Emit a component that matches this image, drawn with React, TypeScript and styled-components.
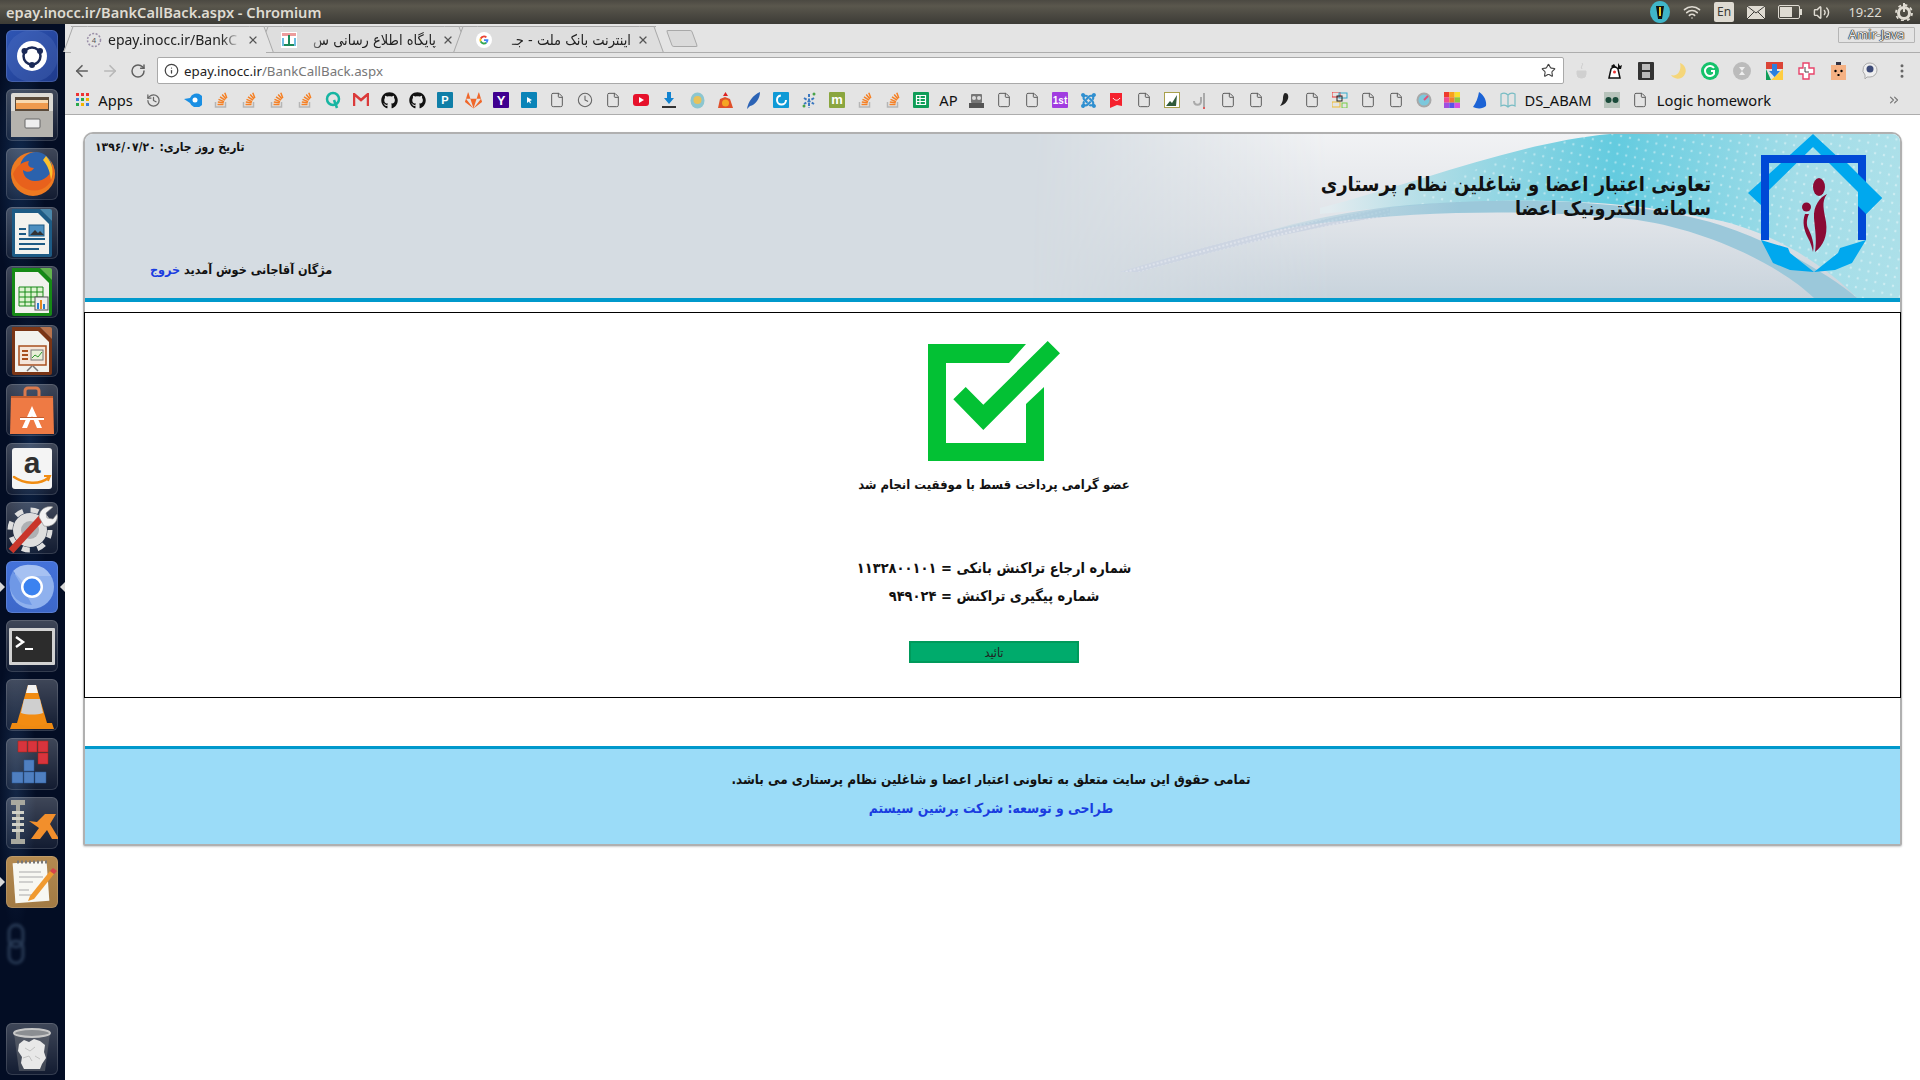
import { ReactNode } from 'react';
import styled, { createGlobalStyle } from 'styled-components';
import { ArrowLeft, ArrowRight, ChevronsRight, Clock, EllipsisVertical, File, History, Info, RotateCw, Star, Volume2, Wifi, X } from 'lucide-react';
import { FaGithub, FaGitlab, FaJoomla } from 'react-icons/fa';

const FARSI = `"DejaVu Sans Condensed", "DejaVu Sans", sans-serif`;
const UI = `"Noto Sans", "Open Sans", sans-serif`;

const GlobalStyle = createGlobalStyle`
  html, body {
    margin: 0;
    padding: 0;
    background: #fff;
  }
`;

const Screen = styled.div`
  width: 1920px;
  height: 1080px;
  display: flex;
  flex-direction: column;
  overflow: hidden;
  font-family: ${UI};
`;

/* ---------- unity panel ---------- */

const TopBar = styled.div`
  height: 24px;
  flex: none;
  display: flex;
  align-items: center;
  padding-left: 6px;
  background: linear-gradient(#4b4942, #5a574d 25%, #3c3b36);
  color: #dfdbd2;
  font-size: 14.6px;
  font-weight: 600;
`;

const Indicators = styled.div`
  margin-left: auto;
  padding-right: 4px;
  display: flex;
  align-items: center;
  height: 24px;
  color: #dfdbd2;
`;

const Indicator = styled.div<{ $w: number }>`
  width: ${(p) => p.$w}px;
  display: flex;
  justify-content: center;
  align-items: center;
`;

const LangBadge = styled.div`
  width: 20px;
  height: 20px;
  border-radius: 2px;
  background: #dfdbd2;
  color: #3c3b36;
  font-size: 12px;
  font-weight: 400;
  line-height: 20px;
  text-align: center;
`;

const ClockText = styled.div`
  font-size: 13px;
  font-weight: 400;
  color: #dfdbd2;
`;

const Desktop = styled.div`
  flex: 1;
  display: flex;
  min-height: 0;
`;

/* ---------- launcher ---------- */

const Launcher = styled.div`
  position: relative;
  width: 65px;
  flex: none;
  box-sizing: border-box;
  padding: 6px 0 5px 6px;
  display: flex;
  flex-direction: column;
  gap: 7px;
  background:
    radial-gradient(ellipse 26px 130px at 20px 140px, rgba(40, 90, 150, 0.35), transparent),
    radial-gradient(ellipse 22px 160px at 30px 420px, rgba(40, 90, 150, 0.3), transparent),
    radial-gradient(ellipse 20px 150px at 16px 760px, rgba(60, 100, 150, 0.3), transparent),
    #030d24;
`;

const Tile = styled.div<{ $bg?: string; $bottom?: boolean }>`
  position: relative;
  width: 52px;
  height: 52px;
  flex: none;
  border-radius: 6px;
  background: ${(p) => p.$bg ?? 'linear-gradient(rgba(255,255,255,0.24), rgba(255,255,255,0.06))'};
  box-shadow: inset 0 0 0 1px rgba(255, 255, 255, 0.14);
  margin-top: ${(p) => (p.$bottom ? 'auto' : '0')};
  svg {
    display: block;
  }
`;

const Pip = styled.i<{ $side: 'left' | 'right' }>`
  position: absolute;
  top: 21px;
  ${(p) => (p.$side === 'left' ? 'left: -6px;' : 'right: -7px;')}
  width: 0;
  height: 0;
  border-top: 5px solid transparent;
  border-bottom: 5px solid transparent;
  ${(p) => (p.$side === 'left' ? 'border-left: 5px solid #d8d8d8;' : 'border-right: 5px solid #d8d8d8;')}
`;

const GhostLink = styled.svg`
  position: absolute;
  left: 5px;
  top: 898px;
  opacity: 0.3;
  filter: blur(1.5px);
`;

const Art = ({ children }: { children: ReactNode }) => (
  <svg width="52" height="52" viewBox="0 0 52 52">
    {children}
  </svg>
);

const LibreDoc = ({ edge, corner, children }: { edge: string; corner: string; children: ReactNode }) => (
  <Art>
    <path d="M6 2h28l12 12v34a2 2 0 0 1-2 2H8a2 2 0 0 1-2-2z" fill={edge} />
    <path d="M34 2h10a2 2 0 0 1 2 2v10z" fill={corner} />
    <path d="M9 6h23l11 11v30H9z" fill="#f2f2ee" />
    {children}
  </Art>
);

const launcherIcons: { key: string; bg?: string; pips?: ('left' | 'right')[]; bottom?: boolean; art: ReactNode }[] = [
  {
    key: 'dash',
    bg: 'linear-gradient(135deg, #2f56b5, #1e3a8c)',
    art: (
      <Art>
        <circle cx="26" cy="26" r="26" fill="#5f7fcb" fillOpacity="0.25" />
        <circle cx="26" cy="26" r="15" fill="#fff" />
        <circle cx="26" cy="26" r="8.500" fill="none" stroke="#1b2a57" strokeWidth="2.500" />
        <circle cx="34" cy="21" r="3" fill="#1b2a57" />
        <circle cx="18.500" cy="21" r="3" fill="#1b2a57" />
        <circle cx="26" cy="35" r="3" fill="#1b2a57" />
      </Art>
    ),
  },
  {
    key: 'files',
    art: (
      <Art>
        <rect x="5" y="4" width="42" height="44" rx="2" fill="#dcdad5" />
        <rect x="9" y="8" width="34" height="14" fill="#5a4a3a" />
        <rect x="10" y="11" width="32" height="3" fill="#f7d9b0" />
        <rect x="10" y="14" width="32" height="6" fill="#ee9a4d" />
        <rect x="5" y="22" width="42" height="26" fill="#b5b3ae" />
        <rect x="19" y="30" width="15" height="9" rx="1" fill="#eee" stroke="#666" />
      </Art>
    ),
  },
  {
    key: 'firefox',
    art: (
      <Art>
        <circle cx="27" cy="26" r="22" fill="#ee7a21" />
        <circle cx="30" cy="20" r="16" fill="#2b62ad" />
        <path d="M7 26c4 16 24 22 35 11 6-6 7-14 5-20-2 10-8 16-18 16-8 0-12-6-12-11 4 3 9 2 11-2-5 0-7-3-5-7-8 1-13 6-16 13z" fill="#e8611c" />
        <path d="M40 8c7 8 8 16 5 24-1-8-3-14-8-20z" fill="#fbc02d" />
      </Art>
    ),
  },
  {
    key: 'writer',
    art: (
      <LibreDoc edge="#1d5b85" corner="#4a87ab">
        <path d="M13 21h7v2h-7zM13 26h7v2h-7zM13 31h26v2H13zM13 36h26v2H13zM13 41h20v2H13z" fill="#1d5b85" />
        <rect x="23" y="18" width="15" height="11" fill="#4c8fc0" stroke="#1d5b85" />
        <path d="M24 28l5-5 3 3 2-2 4 4z" fill="#333" />
      </LibreDoc>
    ),
  },
  {
    key: 'calc',
    art: (
      <LibreDoc edge="#168a16" corner="#62b44e">
        <path d="M13 21h24v19H13zM13 26h24M13 31h24M13 36h24M19 21v19M25 21v19M31 21v19" fill="#dff3d2" stroke="#168a16" />
        <rect x="29" y="31" width="13" height="13" fill="#eee" stroke="#555" />
        <rect x="31" y="37" width="2" height="6" fill="#2a7fd0" />
        <rect x="34" y="34" width="2" height="9" fill="#e8861d" />
        <rect x="37" y="38" width="2" height="5" fill="#2a7fd0" />
      </LibreDoc>
    ),
  },
  {
    key: 'impress',
    art: (
      <LibreDoc edge="#7a3516" corner="#b8734d">
        <rect x="13" y="21" width="27" height="19" fill="#f5e6da" stroke="#a84f1f" strokeWidth="1.5" />
        <path d="M16 25h6v2h-6zM16 29h6v2h-6zM16 33h6v2h-6z" fill="#a84f1f" />
        <rect x="25" y="25" width="12" height="10" fill="#e8f0d8" stroke="#777" />
        <path d="M26 33l3-3 3 2 4-5" stroke="#2f9a2f" fill="none" />
        <path d="M26 41l-5 5M27 41l5 5" stroke="#777" strokeWidth="1.5" />
      </LibreDoc>
    ),
  },
  {
    key: 'software',
    art: (
      <Art>
        <path d="M19 13V7a3 3 0 0 1 3-3h8a3 3 0 0 1 3 3v6" fill="none" stroke="#d97a4e" strokeWidth="3" />
        <path d="M5 12h42l1 38H4z" fill="#ee7a44" />
        <path d="M5 12h42v2H5z" fill="#c25c2e" />
        <path d="M26 22l10 22h-5l-5-12-5 12h-5z" fill="#fff" />
        <rect x="14" y="33" width="24" height="3" fill="#fff" />
        <rect x="14" y="33" width="24" height="1" fill="#c25c2e" />
      </Art>
    ),
  },
  {
    key: 'amazon',
    art: (
      <Art>
        <rect x="6" y="5" width="40" height="41" rx="3" fill="#f4f4f4" />
        <text x="26" y="30" fontFamily="Liberation Sans, sans-serif" fontWeight="700" fontSize="30" textAnchor="middle" fill="#2f2f2f">a</text>
        <path d="M8 34c10 7 26 8 34 1" fill="none" stroke="#f08c12" strokeWidth="2.5" strokeLinecap="round" />
        <path d="M38 33l6 0-2 5" fill="none" stroke="#f08c12" strokeWidth="2" />
      </Art>
    ),
  },
  {
    key: 'settings',
    art: (
      <Art>
        <circle cx="24" cy="28" r="17" fill="#dedede" />
        <circle cx="24" cy="28" r="20" fill="none" stroke="#dedede" strokeWidth="5" strokeDasharray="8 7.700" />
        <circle cx="24" cy="28" r="9" fill="#aeb0b3" />
        <path d="M5 49L37 14" stroke="#c9362b" strokeWidth="6.500" />
        <path d="M33 15c0-7 7-12 14-10l-7 6 1 5 6 1 4-5c2 7-5 14-13 12z" fill="#f2f2f2" stroke="#888" strokeWidth="0.6" />
      </Art>
    ),
  },
  {
    key: 'chromium',
    bg: 'linear-gradient(#4472da, #3c67c9)',
    pips: ['left', 'right'],
    art: (
      <Art>
        <circle cx="26" cy="26" r="22" fill="#8fb1ee" />
        <path d="M26 4a22 22 0 0 1 19 11H26a11 11 0 0 0-9.5 5.5L7 10A22 22 0 0 1 26 4z" fill="#a6c1f2" />
        <path d="M7 10l10 17 9 17a22 22 0 0 1-19-34z" fill="#6f98e6" />
        <circle cx="26" cy="26" r="11" fill="#fff" />
        <circle cx="26" cy="26" r="8.5" fill="#3b82f0" />
      </Art>
    ),
  },
  {
    key: 'terminal',
    art: (
      <Art>
        <rect x="3" y="8" width="46" height="37" rx="1" fill="#d2d2d2" />
        <rect x="6" y="11" width="40" height="31" fill="#2c2c2c" />
        <path d="M10 17l7 5-7 5" fill="none" stroke="#fff" strokeWidth="2.5" />
        <rect x="19" y="28" width="8" height="2" fill="#fff" />
      </Art>
    ),
  },
  {
    key: 'vlc',
    art: (
      <Art>
        <path d="M6 44h40l2 6H4z" fill="#ee8a12" />
        <path d="M22 6h8l11 38c-6 4-24 4-30 0z" fill="#f28c12" />
        <path d="M22 6h8l2 8H20z" fill="#f3f3f3" />
        <path d="M18 20h16l3 14c-6 2-16 2-22 0z" fill="#cfcfcf" />
      </Art>
    ),
  },
  {
    key: 'blocks',
    art: (
      <Art>
        <path d="M12 3h9v11h-9zM22 3h9v11h-9zM32 3h10v11H32zM32 15h10v11H32z" fill="#d8343d" stroke="#a21" strokeWidth="0.5" />
        <path d="M18 22h10v11H18zM6 34h11v11H6zM18 34h10v11H18zM29 34h11v11H29z" fill="#4f7fc0" stroke="#2b5a9a" strokeWidth="0.5" />
      </Art>
    ),
  },
  {
    key: 'xarchiver',
    art: (
      <Art>
        <path d="M5 3h14v5h-5v34h5v5H5v-5h5V8H5z" fill="#a9a99f" />
        <path d="M6 14h12v3H6zM6 20h12v3H6zM6 26h12v3H6zM6 32h12v3H6z" fill="#d2d2c8" />
        <path d="M50 17H39l-8 8-8-1 10 7-8 11h9l7-9 5 9h7l-9-15z" fill="#f28f2c" />
      </Art>
    ),
  },
  {
    key: 'notes',
    bg: 'linear-gradient(#b48a50, #a27a44)',
    pips: ['left'],
    art: (
      <Art>
        <rect x="8" y="6" width="34" height="40" fill="#f7f7f2" transform="rotate(-4 26 26)" />
        <path d="M11 6h30" stroke="#777" strokeWidth="3" strokeDasharray="2 2" />
        <path d="M13 16h22M13 21h24M13 26h14M13 34h10M13 39h16" stroke="#aaa" strokeWidth="1.2" />
        <path d="M24 40l20-25 4 3-20 25-6 2z" fill="#f09a30" />
        <path d="M44 15l3-3 4 3-3 3z" fill="#d8434b" />
      </Art>
    ),
  },
  {
    key: 'trash',
    bottom: true,
    art: (
      <Art>
        <path d="M8 10l5 38h26l5-38z" fill="#70747a" fillOpacity="0.5" />
        <path d="M13 21l5-4 5 2 5-3 6 2 5 4-1 7 2 6-4 6-2 5H18l-3-6 1-6-4-6z" fill="#e8e8e8" />
        <path d="M19 25l5 3 5-4M17 35l6-2 3 5M29 33l5 3" fill="none" stroke="#c2c2c2" />
        <ellipse cx="26" cy="10" rx="18" ry="4" fill="#8b8e92" stroke="#c8c8c8" strokeWidth="2" />
      </Art>
    ),
  },
];

/* ---------- browser chrome ---------- */

const Browser = styled.div`
  flex: 1;
  min-width: 0;
  display: flex;
  flex-direction: column;
`;

const TabStrip = styled.div`
  position: relative;
  height: 28px;
  flex: none;
  display: flex;
  align-items: flex-end;
  padding-left: 6px;
  background: #e4e4e4;
  border-bottom: 1px solid #adadad;
`;

const Tab = styled.div<{ $active?: boolean }>`
  position: relative;
  width: 195px;
  height: 27px;
  box-sizing: border-box;
  margin-bottom: -1px;
  padding: 0 7px 0 15px;
  display: flex;
  align-items: center;
  gap: 6px;
  background: ${(p) => (p.$active ? '#e4e4e4' : '#dedede')};
  border-top: 1px solid #a8a8a8;
  border-bottom: 1px solid ${(p) => (p.$active ? '#e4e4e4' : '#adadad')};
  z-index: ${(p) => (p.$active ? 2 : 1)};
  &::before,
  &::after {
    content: '';
    position: absolute;
    top: -1px;
    bottom: 0;
    width: 14px;
    background: inherit;
    border-top: 1px solid #a8a8a8;
  }
  &::before {
    left: -3px;
    transform: skewX(-20deg);
    border-left: 1px solid #a8a8a8;
  }
  &::after {
    right: -3px;
    transform: skewX(20deg);
    border-right: 1px solid #a8a8a8;
  }
  & > * {
    position: relative;
    z-index: 1;
  }
`;

const TabIcon = styled.div`
  width: 16px;
  height: 16px;
  flex: none;
  display: flex;
`;

const TabTitle = styled.div<{ $rtl?: boolean }>`
  flex: 1;
  min-width: 0;
  white-space: nowrap;
  font-family: ${(p) => (p.$rtl ? FARSI : UI)};
  font-size: ${(p) => (p.$rtl ? 14.5 : 14)}px;
  color: #222;
  direction: ${(p) => (p.$rtl ? 'rtl' : 'ltr')};
  mask-image: linear-gradient(${(p) => (p.$rtl ? 'to left' : 'to right')}, #000 85%, transparent);
`;

const NewTab = styled.div`
  width: 24px;
  height: 15px;
  margin: 0 0 5px 13px;
  background: #dadada;
  border: 1px solid #a8a8a8;
  border-radius: 2px;
  transform: skewX(20deg);
`;

const UserTag = styled.div`
  position: absolute;
  right: 5px;
  top: 3px;
  width: 77px;
  height: 16px;
  box-sizing: border-box;
  border: 1px solid #b5b5b5;
  border-radius: 1px;
  text-align: center;
  font-size: 12.5px;
  line-height: 14px;
  color: #eaeaea;
  text-shadow: 0 0 1px #222, 0 0 1px #222, 0 0 1px #222, 0 0 1px #222;
`;

const Toolbar = styled.div`
  height: 34px;
  flex: none;
  box-sizing: border-box;
  padding: 4px 2px 3px 3px;
  display: flex;
  background: #e4e4e4;
`;

const NavButton = styled.div<{ $dim?: boolean }>`
  width: 28px;
  display: flex;
  justify-content: center;
  align-items: center;
  color: ${(p) => (p.$dim ? '#b8b8b8' : '#5f5f5f')};
`;

const UrlBox = styled.div`
  flex: 1;
  margin: 0 2px 0 5px;
  box-sizing: border-box;
  background: #fff;
  border: 1px solid #a9a9a9;
  border-radius: 2px;
  display: flex;
  align-items: center;
  padding: 0 7px 0 6px;
  gap: 5px;
  font-size: 13.3px;
  color: #222;
`;

const UrlPath = styled.span`
  color: #777;
`;

const UrlStar = styled.div`
  margin-left: auto;
  display: flex;
  color: #444;
`;

const ExtButton = styled.div`
  width: 32px;
  display: flex;
  justify-content: center;
  align-items: center;
  color: #666;
`;

const BookmarkBar = styled.div`
  height: 28px;
  flex: none;
  box-sizing: border-box;
  padding: 0 0 1px 8px;
  display: flex;
  align-items: center;
  background: #e4e4e4;
  border-bottom: 1px solid #adadad;
  font-size: 14.7px;
  color: #111;
`;

const Slot = styled.div<{ $w?: number; $gap?: number }>`
  width: ${(p) => p.$w ?? 28}px;
  margin-left: ${(p) => p.$gap ?? 0}px;
  flex: none;
  display: flex;
  justify-content: center;
  align-items: center;
  white-space: nowrap;
`;

const Overflow = styled.div`
  margin-left: auto;
  margin-right: 19px;
  display: flex;
  color: #777;
`;

const Doc = () => <File size={16} color="#5d5d5d" strokeWidth={1.5} />;

const StackIcon = () => (
  <svg width="16" height="18" viewBox="0 0 16 18">
    <path d="M2.5 11v5h10v-5" fill="none" stroke="#b5b5b5" strokeWidth="1.5" />
    <path d="M4.5 13.5h6M4.8 11l6 .8M5.5 8.4l5.6 2.2M7 5.8l5 3.4M9.2 3.5l3.8 4.6M11.8 1.8l2 5.2" stroke="#f58025" strokeWidth="1.5" fill="none" />
  </svg>
);

const Box = ({ bg, children }: { bg: string; children: ReactNode }) => (
  <svg width="16" height="16" viewBox="0 0 16 16">
    <rect width="16" height="16" fill={bg} rx="1" />
    {children}
  </svg>
);

const Label = ({ x = 8, y = 12, size = 11, children }: { x?: number; y?: number; size?: number; children: ReactNode }) => (
  <text x={x} y={y} fontFamily="Liberation Sans, sans-serif" fontWeight="700" fontSize={size} textAnchor="middle" fill="#fff">
    {children}
  </text>
);

const bookmarkIcons: ReactNode[] = [
  <svg width="18" height="14" viewBox="0 0 18 14"><path d="M0 6l6-1a7 7 0 1 1 0 5z" fill="#1a8fe3" /><circle cx="11" cy="7" r="2.5" fill="#fff" /></svg>,
  <StackIcon />, <StackIcon />, <StackIcon />, <StackIcon />,
  <svg width="16" height="18" viewBox="0 0 16 18"><circle cx="8" cy="8" r="6" fill="none" stroke="#17b5a2" strokeWidth="2.5" /><path d="M9 9l3 8" stroke="#17b5a2" strokeWidth="2.5" /></svg>,
  <svg width="16" height="14" viewBox="0 0 16 14"><path d="M1 13V1l7 6 7-6v12" fill="none" stroke="#db3a3a" strokeWidth="2.5" /></svg>,
  <FaGithub size={17} color="#111" />,
  <FaGithub size={17} color="#111" />,
  <Box bg="#0f7fa8"><Label>P</Label></Box>,
  <FaGitlab size={17} color="#f0672a" />,
  <Box bg="#400090"><Label size={13} y={13}>Y</Label></Box>,
  <Box bg="#0a84b8"><path d="M6 5l5 3-2 1 1 2-1 .5-1-2-2 1.500z" fill="#fff" /></Box>,
  <Doc />,
  <Clock size={16} color="#666" strokeWidth={1.6} />,
  <Doc />,
  <svg width="16" height="12" viewBox="0 0 16 12"><rect width="16" height="12" rx="3" fill="#e6112b" /><path d="M6 3l5 3-5 3z" fill="#fff" /></svg>,
  <svg width="16" height="17" viewBox="0 0 16 17"><path d="M6 0h4v6h3l-5 6-5-6h3z" fill="#1283d0" /><rect x="1" y="14" width="14" height="2" fill="#333" /></svg>,
  <svg width="15" height="17" viewBox="0 0 15 17"><ellipse cx="7.500" cy="8.500" rx="7" ry="8" fill="#8cc6d0" /><circle cx="7.500" cy="8" r="4" fill="#e8c25a" /></svg>,
  <svg width="17" height="17" viewBox="0 0 17 17"><path d="M1 16l2-9 5-2 5 2 3 9z" fill="#e0502a" /><circle cx="8.500" cy="11" r="3.500" fill="#f5a623" /><path d="M6 4l2.500-4L11 4z" fill="#d22" /></svg>,
  <svg width="15" height="17" viewBox="0 0 15 17"><path d="M1 17C2 10 7 3 14 0c0 7-5 13-10 14z" fill="#2b63b5" /></svg>,
  <Box bg="#0f9ad6"><circle cx="8.500" cy="8" r="4.500" fill="none" stroke="#fff" strokeWidth="2" strokeDasharray="20 8" /></Box>,
  <svg width="16" height="17" viewBox="0 0 16 17"><path d="M8 2v14M3 6l10 6M13 6L3 12" stroke="#3b78c0" strokeWidth="2" strokeDasharray="3 1.500" /><circle cx="13" cy="2" r="1.500" fill="#49a349" /><circle cx="3" cy="14" r="1.500" fill="#49a349" /></svg>,
  <Box bg="#8aa63f"><Label size={13}>m</Label></Box>,
  <StackIcon />, <StackIcon />,
  <Box bg="#0f9d58"><path d="M3.500 3.500h9v9h-9zM3.500 6.500h9M3.500 9.500h9M7 3.500v9" fill="none" stroke="#fff" strokeWidth="1.200" /></Box>,
];

const bookmarkIconsTail: ReactNode[] = [
  <svg width="17" height="16" viewBox="0 0 17 16"><rect x="3" y="2" width="11" height="9" rx="1" fill="#777" /><circle cx="6" cy="6" r="2" fill="#ddd" /><circle cx="11" cy="6" r="2" fill="#ddd" /><rect x="1" y="11" width="15" height="5" fill="#555" /></svg>,
  <Doc />, <Doc />,
  <Box bg="#a13de0"><Label size={10} y={11.500}>1st</Label></Box>,
  <FaJoomla size={17} color="#2f8fd0" />,
  <svg width="14" height="17" viewBox="0 0 14 17"><path d="M1 1h12v13l-5-1-7 3z" fill="#f5212d" /><path d="M4 6c2 3 5 3 7 0" stroke="#fff" fill="none" /></svg>,
  <Doc />,
  <svg width="16" height="16" viewBox="0 0 16 16"><rect x=".5" y=".5" width="15" height="15" fill="#fff" stroke="#a8a04c" /><path d="M2 14l4-5 2 2 5-8-1 11z" fill="#2f5a3a" /></svg>,
  <svg width="16" height="17" viewBox="0 0 16 17"><path d="M2 9c0 5 7 5 7 0V5M12 1v14" stroke="#aaa" strokeWidth="2" fill="none" /><circle cx="12" cy="16" r="1" fill="#d33" /></svg>,
  <Doc />, <Doc />,
  <svg width="15" height="17" viewBox="0 0 15 17"><path d="M8 1c4 0 4 5 2 8-2 3-4 4-7 5 2-3 3-5 3-8 0-2 1-5 2-5z" fill="#222" /></svg>,
  <Doc />,
  <svg width="16" height="16" viewBox="0 0 16 16"><rect x="0" y="0" width="8" height="5" fill="none" stroke="#e33" /><rect x="7" y="1" width="8" height="5" fill="none" stroke="#3ac" /><rect x="0" y="10" width="8" height="5" fill="none" stroke="#eb3" /><rect x="10" y="11" width="5" height="5" fill="none" stroke="#7c4" /><rect x="5" y="4" width="5" height="5" fill="none" stroke="#222" /></svg>,
  <Doc />, <Doc />,
  <svg width="16" height="16" viewBox="0 0 16 16"><circle cx="8" cy="8" r="7.500" fill="#a8a8a8" /><circle cx="8" cy="8" r="5.500" fill="#7cc8dc" /><path d="M8 8l4-4" stroke="#e0517a" strokeWidth="2" /></svg>,
  <svg width="16" height="16" viewBox="0 0 16 16"><path d="M0 0h5.300v5.300H0z" fill="#ef3b2d" /><path d="M5.300 0h5.300v5.300H5.300z" fill="#f9a11b" /><path d="M10.600 0H16v5.300h-5.400z" fill="#fadf2c" /><path d="M0 5.300h5.300v5.400H0z" fill="#f04a8f" /><path d="M5.300 5.300h5.300v5.400H5.300z" fill="#ef7d2d" /><path d="M10.600 5.300H16v5.400h-5.400z" fill="#8dc63f" /><path d="M0 10.700h5.300V16H0z" fill="#a04fe0" /><path d="M5.300 10.700h5.300V16H5.300z" fill="#5a55e8" /><path d="M10.600 10.700H16V16h-5.400z" fill="#d94fe0" /></svg>,
  <svg width="14" height="17" viewBox="0 0 14 17"><path d="M6 0c5 3 8 9 7 14-3 3-9 3-13 1 3-4 5-9 6-15z" fill="#1c63d5" /></svg>,
  <svg width="16" height="16" viewBox="0 0 16 16"><path d="M8 3C6 1 3 1 1 2v12c2-1 5-1 7 1 2-2 5-2 7-1V2c-2-1-5-1-7 1zM8 3v12" fill="none" stroke="#78bcc4" strokeWidth="1.200" /></svg>,
];

const extensionIcons: ReactNode[] = [
  <svg width="16" height="18" viewBox="0 0 16 18"><path d="M3 9h9v3a4 4 0 0 1-4 4H7a4 4 0 0 1-4-4zM8 1c2 2-2 3 0 6" fill="#d0d0d0" stroke="#d0d0d0" /></svg>,
  <svg width="17" height="18" viewBox="0 0 17 18"><path d="M3 16l2-9a4 4 0 0 1 7 0l2 9z" fill="#fff" stroke="#111" strokeWidth="1.500" /><path d="M12 1l2 3 2-1-1 4h-3zM5 4l3-2 2 3-3 1z" fill="#111" /><circle cx="8.500" cy="10" r="1.500" fill="#e33" /></svg>,
  <svg width="16" height="18" viewBox="0 0 16 18"><rect width="16" height="18" rx="1" fill="#333" /><rect x="4" y="2" width="8" height="6" fill="#bbb" /><rect x="4" y="10" width="8" height="6" fill="#bbb" /></svg>,
  <svg width="18" height="18" viewBox="0 0 18 18"><path d="M11 1a8 8 0 1 1-9 12c6 2 11-4 9-12z" fill="#f5d67a" /></svg>,
  <svg width="18" height="18" viewBox="0 0 18 18"><circle cx="9" cy="9" r="9" fill="#15c26b" /><path d="M13 6a5 5 0 1 0 0 6V9h-3" fill="none" stroke="#fff" strokeWidth="2" /></svg>,
  <svg width="18" height="18" viewBox="0 0 18 18"><circle cx="9" cy="9" r="9" fill="#bbb" /><path d="M6 5h6L6 13h6z" fill="#eee" /></svg>,
  <svg width="17" height="18" viewBox="0 0 17 18"><path d="M0 0h17v7H0z" fill="#db4437" /><path d="M0 7l5 11H0z" fill="#0f9d58" /><path d="M5 18l12-11v11z" fill="#ffcd40" /><path d="M6 2h5v7h3l-5.500 6L3 9h3z" fill="#2a7fe0" /></svg>,
  <svg width="17" height="18" viewBox="0 0 17 18"><path d="M5 1h6v5h5v6h-5v5H5v-5H1V6h4z" fill="#fff" stroke="#e8436a" strokeWidth="1.400" /><path d="M7 5v5h4" stroke="#444" fill="none" /></svg>,
  <svg width="15" height="18" viewBox="0 0 15 18"><rect y="3" width="15" height="15" fill="#f5b183" /><rect x="5" width="5" height="3" fill="#334" /><circle cx="4.500" cy="9" r="1.200" /><circle cx="10.500" cy="9" r="1.200" /><rect x="6.500" y="12" width="2" height="2" /></svg>,
  <svg width="18" height="18" viewBox="0 0 18 18"><path d="M9 1a7 7 0 0 1 0 14H6l-2 2v-4A7 7 0 0 1 9 1z" fill="#eee" stroke="#aaa" /><circle cx="9" cy="7" r="3.500" fill="#3c4a78" /></svg>,
  <EllipsisVertical size={18} color="#666" />,
];

/* ---------- page ---------- */

const Page = styled.div`
  flex: 1;
  background: #fff;
  padding: 17px 18px 0 18px;
  font-family: ${FARSI};
  color: #111;
`;

const Panel = styled.div`
  width: 1819px;
  box-sizing: border-box;
  border: 2px solid #b0b0b0;
  border-radius: 10px 10px 2px 2px;
  box-shadow: 0 1px 2px rgba(0, 0, 0, 0.2);
`;

const Header = styled.header`
  position: relative;
  height: 164px;
  display: flex;
  justify-content: space-between;
  border-bottom: 4px solid #0099cc;
  border-radius: 8px 8px 0 0;
  overflow: hidden;
  background: #d5dce2;
`;

const HeaderArt = styled.svg`
  position: absolute;
  left: 0;
  top: 0;
`;

const HeaderMeta = styled.div`
  position: relative;
  width: 300px;
  display: flex;
  flex-direction: column;
  align-items: flex-start;
  justify-content: space-between;
  padding: 5px 0 19px 10px;
`;

const DateLine = styled.div`
  font-size: 12px;
  font-weight: 700;
  line-height: 16px;
`;

const Welcome = styled.div`
  margin-left: 55px;
  font-size: 12.5px;
  font-weight: 700;
  line-height: 18px;
`;

const LogoutLink = styled.a`
  color: #1a3de0;
  text-decoration: none;
`;

const Brand = styled.div`
  position: relative;
  padding: 37px 189px 0 0;
  text-align: right;
  font-weight: 700;
`;

const BrandName = styled.div`
  font-size: 20px;
  line-height: 26px;
`;

const BrandSub = styled.div`
  font-size: 19.500px;
  line-height: 24px;
`;

const Result = styled.section`
  margin: 10px -1px 0;
  height: 386px;
  box-sizing: border-box;
  border: 1px solid #000;
  display: flex;
  flex-direction: column;
  align-items: center;
  padding: 28px 0 0 3px;
`;

const ResultMark = styled.svg`
  flex: none;
`;

const ResultTitle = styled.div`
  margin-top: 13px;
  font-size: 13px;
  font-weight: 700;
  line-height: 22px;
`;

const ReceiptList = styled.div`
  margin-top: 58px;
  font-size: 14.5px;
  font-weight: 700;
  line-height: 28px;
  text-align: center;
`;

const ConfirmButton = styled.button`
  margin-top: 31px;
  width: 170px;
  height: 22px;
  padding: 0;
  background: #00ab6c;
  border: 2px solid #009a5b;
  font-family: ${FARSI};
  font-size: 12.500px;
  color: #222;
`;

const Footer = styled.footer`
  margin-top: 48px;
  height: 98px;
  box-sizing: border-box;
  background: #9bdcf8;
  border-top: 3px solid #0099cc;
  padding: 17px 3px 0 0;
  text-align: center;
  font-weight: 700;
  font-size: 13.4px;
  line-height: 28px;
`;

const FooterCredit = styled.div`
  font-size: 13.800px;
  color: #1a3de0;
`;

const HeaderBanner = () => (
  <HeaderArt width="1815" height="164" viewBox="85 134 1815 164">
    <defs>
      <linearGradient id="sky" x1="0" y1="0" x2="0" y2="1">
        <stop offset="0" stopColor="#f1f2f4" />
        <stop offset="0.55" stopColor="#dfe3e8" />
        <stop offset="1" stopColor="#c8d3dc" />
      </linearGradient>
      <linearGradient id="fadeIn" gradientUnits="userSpaceOnUse" x1="1030" y1="0" x2="1330" y2="0">
        <stop offset="0" stopColor="#000" />
        <stop offset="1" stopColor="#fff" />
      </linearGradient>
      <mask id="skyMask">
        <rect x="85" y="134" width="1815" height="164" fill="url(#fadeIn)" />
      </mask>
      <linearGradient id="teal" gradientUnits="userSpaceOnUse" x1="1330" y1="0" x2="1900" y2="0">
        <stop offset="0" stopColor="#e2ebef" />
        <stop offset="0.2" stopColor="#a9dbe5" />
        <stop offset="0.5" stopColor="#63cbdf" />
        <stop offset="0.82" stopColor="#a3dde8" />
        <stop offset="1" stopColor="#ace0e9" />
      </linearGradient>
      <linearGradient id="bandFade" gradientUnits="userSpaceOnUse" x1="1230" y1="0" x2="1460" y2="0">
        <stop offset="0" stopColor="#9bc8da" stopOpacity="0" />
        <stop offset="1" stopColor="#9bc8da" />
      </linearGradient>
      <pattern id="dots" width="9" height="9" patternUnits="userSpaceOnUse" patternTransform="rotate(12)">
        <circle cx="3" cy="3" r="1.2" fill="#fff" fillOpacity="0.4" />
      </pattern>
      <pattern id="fineDots" width="4" height="4" patternUnits="userSpaceOnUse" patternTransform="rotate(-15)">
        <circle cx="2" cy="2" r="0.9" fill="#fff" fillOpacity="0.5" />
      </pattern>
    </defs>
    <rect x="85" y="134" width="1815" height="164" fill="url(#sky)" mask="url(#skyMask)" />
    <path d="M1120 272C1200 248 1290 222 1390 208V216C1300 228 1210 252 1140 272Z" fill="#cdd5e2" />
    <path d="M1120 272C1200 248 1290 222 1390 208V216C1300 228 1210 252 1140 272Z" fill="url(#fineDots)" />
    <path d="M1320 208C1420 182 1520 142 1610 134H1900V298H1857C1820 260 1760 225 1700 217C1620 198 1500 198 1420 205C1380 208 1340 212 1320 214Z" fill="url(#teal)" />
    <path d="M1420 205C1500 198 1620 198 1700 217C1760 225 1820 260 1857 298H1900V134H1610C1540 140 1480 170 1420 190Z" fill="url(#dots)" />
    <path d="M1250 236C1320 215 1380 206 1440 203C1520 198 1640 200 1720 225C1780 245 1830 275 1857 298H1814C1780 265 1700 225 1620 218C1540 210 1430 210 1330 222C1290 227 1260 233 1250 236Z" fill="url(#bandFade)" />
    <path d="M1748 193L1813 134L1882 198L1866 214L1860 194L1813 147L1769 190L1765 208L1761 205Z" fill="#00a8ee" />
    <path d="M1761 240V155H1866V240H1858V163H1769V240Z" fill="#0049d6" />
    <path d="M1847 163L1882 198L1866 214L1858 206V188L1836 163Z" fill="#00a8ee" />
    <path d="M1761 240L1788 248L1790 253L1814 272L1790 270L1773 263Z" fill="#00a8ee" />
    <path d="M1866 240L1840 248L1838 253L1814 272L1835 270L1852 263Z" fill="#00a8ee" />
    <ellipse cx="1819" cy="187" rx="6" ry="9" fill="#8a0a34" />
    <circle cx="1806.500" cy="207" r="4.500" fill="#8a0a34" />
    <path d="M1827 194C1820 197 1813 206 1814 218C1815 230 1817 240 1815 252C1823 246 1828 236 1826 222C1824 210 1821 202 1827 194Z" fill="#8a0a34" />
    <path d="M1805 214C1802 222 1804 230 1808 238C1811 243 1812 248 1813 252C1815 244 1811 234 1808 228C1806 224 1807 218 1809 214Z" fill="#8a0a34" />
  </HeaderArt>
);

export default function App() {
  return (
    <Screen>
      <GlobalStyle />
      <TopBar>
        epay.inocc.ir/BankCallBack.aspx - Chromium
        <Indicators>
          <Indicator $w={24}>
            <svg width="20" height="22" viewBox="0 0 20 22"><ellipse cx="10" cy="11" rx="10" ry="11" fill="#3fb6c9" /><path d="M6 5h8l-2 13h-4z" fill="#111" /><path d="M9 6h2v9H9z" fill="#e8c820" /></svg>
          </Indicator>
          <Indicator $w={40}><Wifi size={18} strokeWidth={2.2} /></Indicator>
          <Indicator $w={24}><LangBadge>En</LangBadge></Indicator>
          <Indicator $w={40}>
            <svg width="18" height="13" viewBox="0 0 18 13"><rect width="18" height="13" fill="#dfdbd2" /><path d="M0 0l9 7 9-7M0 13l7-7M18 13l-7-7" stroke="#3c3b36" fill="none" /></svg>
          </Indicator>
          <Indicator $w={28}>
            <svg width="24" height="14" viewBox="0 0 24 14"><rect x=".5" y=".5" width="21" height="13" rx="1.500" fill="none" stroke="#dfdbd2" /><rect x="2" y="2" width="12" height="10" fill="#dfdbd2" /><rect x="22" y="4" width="2" height="6" fill="#dfdbd2" /></svg>
          </Indicator>
          <Indicator $w={34}><Volume2 size={17} /></Indicator>
          <Indicator $w={54}><ClockText>19:22</ClockText></Indicator>
          <Indicator $w={24}>
            <svg width="18" height="18" viewBox="0 0 18 18"><circle cx="9" cy="10" r="5.500" fill="none" stroke="#dfdbd2" strokeWidth="3" /><circle cx="9" cy="10" r="8" fill="none" stroke="#dfdbd2" strokeWidth="1.800" strokeDasharray="3 3.300" /><rect x="8" y="0" width="2" height="9" fill="#dfdbd2" /></svg>
          </Indicator>
        </Indicators>
      </TopBar>
      <Desktop>
        <Launcher>
          {launcherIcons.map((icon) => (
            <Tile key={icon.key} $bg={icon.bg} $bottom={icon.bottom}>
              {icon.art}
              {icon.pips?.map((side) => <Pip key={side} $side={side} />)}
            </Tile>
          ))}
          <GhostLink width="22" height="44" viewBox="0 0 22 44">
            <rect x="4" y="3" width="14" height="22" rx="7" fill="none" stroke="#7da0c4" strokeWidth="3" />
            <rect x="4" y="19" width="14" height="22" rx="7" fill="none" stroke="#7da0c4" strokeWidth="3" />
          </GhostLink>
        </Launcher>
        <Browser>
          <TabStrip>
            <Tab $active>
              <TabIcon>
                <svg width="16" height="16" viewBox="0 0 16 16"><circle cx="8" cy="8" r="6.500" fill="none" stroke="#9a8fa8" strokeWidth="1.500" strokeDasharray="2 1.500" /><text x="8" y="11" fontSize="8" textAnchor="middle" fontFamily="Liberation Sans, sans-serif" fill="#555">4</text></svg>
              </TabIcon>
              <TabTitle>epay.inocc.ir/BankC</TabTitle>
              <X size={12} color="#555" strokeWidth={2.4} />
            </Tab>
            <Tab>
              <TabIcon>
                <svg width="16" height="16" viewBox="0 0 16 16"><rect width="16" height="16" fill="#fff" /><path d="M1 1h14v3H1z" fill="#e05a5a" fillOpacity="0.6" /><path d="M8 3v10M3 13h10" stroke="#1b8a5a" strokeWidth="2" /><path d="M2 6v8M14 6v8" stroke="#3ba7d6" strokeWidth="1.500" /></svg>
              </TabIcon>
              <TabTitle $rtl>پایگاه اطلاع رسانی س</TabTitle>
              <X size={12} color="#555" strokeWidth={2.4} />
            </Tab>
            <Tab>
              <TabIcon>
                <svg width="16" height="16" viewBox="0 0 16 16"><circle cx="8" cy="8" r="8" fill="#fff" /><path d="M8 3.500a4.500 4.500 0 0 1 3 1.200l-1.300 1.300A2.700 2.700 0 0 0 5.400 7.200L3.900 6A4.500 4.500 0 0 1 8 3.500z" fill="#ea4335" /><path d="M3.900 6l1.500 1.200a2.700 2.700 0 0 0 0 1.600L3.900 10a4.500 4.500 0 0 1 0-4z" fill="#fbbc05" /><path d="M3.900 10l1.500-1.200A2.700 2.700 0 0 0 9.600 10l1.400 1.200A4.500 4.500 0 0 1 3.900 10z" fill="#34a853" /><path d="M12.400 7.200H8v1.800h2.500a2.200 2.200 0 0 1-.9 1L11 11.200a4.500 4.500 0 0 0 1.400-4z" fill="#4285f4" /></svg>
              </TabIcon>
              <TabTitle $rtl>اینترنت بانک ملت - جـ</TabTitle>
              <X size={12} color="#555" strokeWidth={2.4} />
            </Tab>
            <NewTab />
            <UserTag>Amir-Java</UserTag>
          </TabStrip>
          <Toolbar>
            <NavButton><ArrowLeft size={18} strokeWidth={2.2} /></NavButton>
            <NavButton $dim><ArrowRight size={18} strokeWidth={2.2} /></NavButton>
            <NavButton><RotateCw size={16} strokeWidth={2.2} /></NavButton>
            <UrlBox>
              <Info size={15} color="#444" />
              <span>epay.inocc.ir<UrlPath>/BankCallBack.aspx</UrlPath></span>
              <UrlStar><Star size={15} strokeWidth={1.8} /></UrlStar>
            </UrlBox>
            {extensionIcons.map((icon, i) => <ExtButton key={i}>{icon}</ExtButton>)}
          </Toolbar>
          <BookmarkBar>
            <Slot $w={20}>
              <svg width="14" height="14" viewBox="0 0 14 14">
                <path d="M0 0h3v3H0z" fill="#e33" /><path d="M5 0h3v3H5z" fill="#e33" /><path d="M10 0h3v3h-3z" fill="#e33" />
                <path d="M0 5h3v3H0z" fill="#3b7de0" /><path d="M5 5h3v3H5z" fill="#2aa84a" /><path d="M10 5h3v3h-3z" fill="#f5b400" />
                <path d="M0 10h3v3H0z" fill="#2aa84a" /><path d="M5 10h3v3H5z" fill="#f5b400" /><path d="M10 10h3v3h-3z" fill="#3b7de0" />
              </svg>
            </Slot>
            <Slot $w={35} $gap={5}>Apps</Slot>
            <Slot $gap={6}><History size={15} color="#666" /></Slot>
            <Slot $gap={12}>{bookmarkIcons[0]}</Slot>
            {bookmarkIcons.slice(1).map((icon, i) => <Slot key={i}>{icon}</Slot>)}
            <Slot $w={27}>AP</Slot>
            {bookmarkIconsTail.map((icon, i) => <Slot key={i}>{icon}</Slot>)}
            <Slot $w={70} $gap={1}>DS_ABAM</Slot>
            <Slot $w={28} $gap={5}>
              <svg width="16" height="16" viewBox="0 0 16 16"><rect width="16" height="16" fill="#b8c4bc" /><circle cx="4.500" cy="8" r="3" fill="#1a4a3a" /><circle cx="11.500" cy="8" r="3" fill="#1a4a3a" /></svg>
            </Slot>
            <Slot $w={28}><Doc /></Slot>
            <Slot $w={114} $gap={3}>Logic homework</Slot>
            <Overflow><ChevronsRight size={14} /></Overflow>
          </BookmarkBar>
          <Page>
            <Panel>
              <Header>
                <HeaderBanner />
                <HeaderMeta>
                  <DateLine dir="rtl">تاریخ روز جاری: ۱۳۹۶/۰۷/۲۰</DateLine>
                  <Welcome dir="rtl">مژگان آقاجانی خوش آمدید <LogoutLink href="#">خروج</LogoutLink></Welcome>
                </HeaderMeta>
                <Brand dir="rtl">
                  <BrandName>تعاونی اعتبار اعضا و شاغلین نظام پرستاری</BrandName>
                  <BrandSub>سامانه الکترونیک اعضا</BrandSub>
                </Brand>
              </Header>
              <Result>
                <ResultMark width="132" height="120" viewBox="0 0 132 120">
                  <path d="M0 3H98L81 22H18V102H98V63L116 46V120H0Z" fill="#03c134" />
                  <path d="M119.700 0L132 12.300L55.300 89L25.300 58.300L37.700 46L55.300 63.700Z" fill="#03c134" />
                </ResultMark>
                <ResultTitle dir="rtl">عضو گرامی پرداخت قسط با موفقیت انجام شد</ResultTitle>
                <ReceiptList dir="rtl">
                  <div>شماره ارجاع تراکنش بانکی = ۱۱۳۲۸۰۰۱۰۱</div>
                  <div>شماره پیگیری تراکنش = ۹۴۹۰۲۴</div>
                </ReceiptList>
                <ConfirmButton>تائید</ConfirmButton>
              </Result>
              <Footer dir="rtl">
                <div>تمامی حقوق این سایت متعلق به تعاونی اعتبار اعضا و شاغلین نظام پرستاری می باشد.</div>
                <FooterCredit>طراحی و توسعه: شرکت پرشین سیستم</FooterCredit>
              </Footer>
            </Panel>
          </Page>
        </Browser>
      </Desktop>
    </Screen>
  );
}
